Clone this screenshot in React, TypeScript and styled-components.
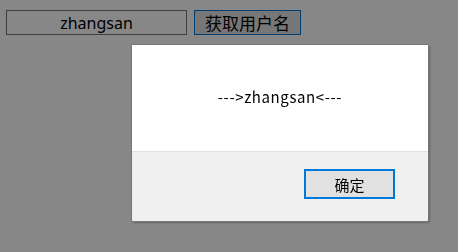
import styled, { createGlobalStyle } from "styled-components";

const Global = createGlobalStyle`
  html, body {
    margin: 0;
    padding: 0;
    background: #ffffff;
    width: 458px;
    height: 252px;
    overflow: hidden;
  }
`;

const Page = styled.div`
  display: flex;
  align-items: center;
  gap: 7px;
  padding: 10px 6px;
`;

const NameInput = styled.input`
  box-sizing: border-box;
  width: 181px;
  height: 25px;
  border: 1px solid #767676;
  padding: 0 4px;
  text-align: center;
  font-family: "Noto Sans", "Noto Sans CJK SC", sans-serif;
  font-size: 16px;
  color: #000;
  outline: none;
`;

const FetchButton = styled.button`
  box-sizing: border-box;
  width: 107px;
  height: 25px;
  border: 1px solid #0078d7;
  background: #e1e1e1;
  padding: 0;
  font-family: "Noto Sans CJK SC", sans-serif;
  font-size: 17px;
  line-height: 23px;
  color: #000;
`;

const Mask = styled.div`
  position: fixed;
  inset: 0;
  background: rgba(0, 0, 0, 0.47);
`;

const Dialog = styled.div`
  position: fixed;
  left: 131px;
  top: 44px;
  width: 298px;
  height: 178px;
  box-sizing: border-box;
  border: 1px solid #777;
  border-radius: 2px;
  background: #f0f0f0;
  display: flex;
  flex-direction: column;
  box-shadow: 1px 1px 2px rgba(0, 0, 0, 0.25);
`;

const Message = styled.div`
  box-sizing: border-box;
  height: 107px;
  background: #fff;
  border-bottom: 1px solid #dfdfdf;
  display: flex;
  align-items: center;
  justify-content: center;
  font-family: "Noto Sans CJK SC", sans-serif;
  font-size: 15px;
  letter-spacing: 0.6px;
  color: #000;
  padding-bottom: 4px;
`;

const Footer = styled.div`
  display: flex;
  justify-content: flex-end;
  padding: 17px 33px 0 0;
`;

const OkButton = styled.button`
  box-sizing: border-box;
  width: 91px;
  height: 30px;
  border: 2px solid #0078d7;
  background: #e1e1e1;
  font-family: "Noto Sans CJK SC", sans-serif;
  font-size: 15px;
  color: #000;
  padding: 0;
`;

export default function App() {
  return (
    <>
      <Global />
      <Page>
        <NameInput defaultValue="zhangsan" />
        <FetchButton>获取用户名</FetchButton>
      </Page>
      <Mask />
      <Dialog>
        <Message>---&gt;zhangsan&lt;---</Message>
        <Footer>
          <OkButton>确定</OkButton>
        </Footer>
      </Dialog>
    </>
  );
}
